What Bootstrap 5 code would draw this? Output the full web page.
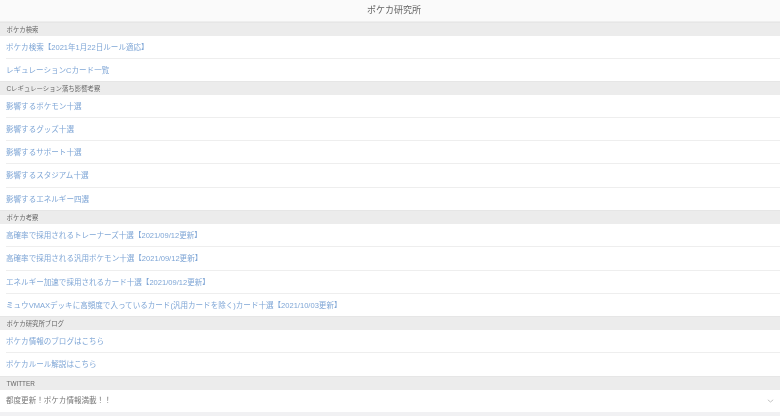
<!DOCTYPE html>
<html lang="ja">
<head>
<meta charset="utf-8">
<title>ポケカ研究所</title>
<link href="https://cdn.jsdelivr.net/npm/bootstrap@5.3.0/dist/css/bootstrap.min.css" rel="stylesheet">
<style>
html,body{height:416px;overflow:hidden;background:#fff;}
body{font-family:"Liberation Sans","Noto Sans CJK JP",sans-serif;}
.site-head{height:22px;background:#fafafa;color:#666;font-size:9px;line-height:21px;padding-left:8px;border-bottom:1px solid #eee;}
.sec-bar{height:14px;background:#ececec;color:#666;font-size:6.4px;line-height:14px;padding-left:6.5px;border-top:1px solid #e6e6e6;}
.menu-list{margin:0;padding:0;list-style:none;}
.menu-item{height:23.2px;margin-left:6px;border-bottom:1px solid #eee;font-size:7.55px;line-height:23px;}
.menu-item:last-child{border-bottom:0;height:22.6px;}
.menu-short .menu-item{height:22.6px;}
.menu-short .menu-item:last-child{height:22.2px;}
.menu-item a{color:#7fa6d6;text-decoration:none;display:block;}
.tw-row{height:21.7px;padding-left:6px;padding-right:6px;color:#777;font-size:7.55px;line-height:22px;}
.tw-foot{height:5px;background:#f1f1f3;}
.page-wrap{filter:blur(.7px);}
</style>
</head>
<body>
<div class="page-wrap">
<header class="site-head text-center">ポケカ研究所</header>
<div class="sec-bar">ポケカ検索</div>
<ul class="menu-list menu-short">
<li class="menu-item"><a href="#">ポケカ検索【2021年1月22日ルール適応】</a></li>
<li class="menu-item"><a href="#">レギュレーションCカード一覧</a></li>
</ul>
<div class="sec-bar">Cレギュレーション落ち影響考察</div>
<ul class="menu-list">
<li class="menu-item"><a href="#">影響するポケモン十選</a></li>
<li class="menu-item"><a href="#">影響するグッズ十選</a></li>
<li class="menu-item"><a href="#">影響するサポート十選</a></li>
<li class="menu-item"><a href="#">影響するスタジアム十選</a></li>
<li class="menu-item"><a href="#">影響するエネルギー四選</a></li>
</ul>
<div class="sec-bar">ポケカ考察</div>
<ul class="menu-list">
<li class="menu-item"><a href="#">高確率で採用されるトレーナーズ十選【2021/09/12更新】</a></li>
<li class="menu-item"><a href="#">高確率で採用される汎用ポケモン十選【2021/09/12更新】</a></li>
<li class="menu-item"><a href="#">エネルギー加速で採用されるカード十選【2021/09/12更新】</a></li>
<li class="menu-item"><a href="#">ミュウVMAXデッキに高頻度で入っているカード(汎用カードを除く)カード十選【2021/10/03更新】</a></li>
</ul>
<div class="sec-bar">ポケカ研究所ブログ</div>
<ul class="menu-list">
<li class="menu-item"><a href="#">ポケカ情報のブログはこちら</a></li>
<li class="menu-item"><a href="#">ポケカルール解説はこちら</a></li>
</ul>
<div class="sec-bar">TWITTER</div>
<div class="tw-row d-flex justify-content-between align-items-center">
<span>都度更新！ポケカ情報満載！！</span>
<svg width="7" height="4" viewBox="0 0 7 4" aria-hidden="true"><path d="M.8.8 3.5 3 6.2.8" fill="none" stroke="#c4c4c4"/></svg>
</div>
<div class="tw-foot"></div>
</div>
<script src="https://cdn.jsdelivr.net/npm/bootstrap@5.3.0/dist/js/bootstrap.bundle.min.js"></script>
</body>
</html>
